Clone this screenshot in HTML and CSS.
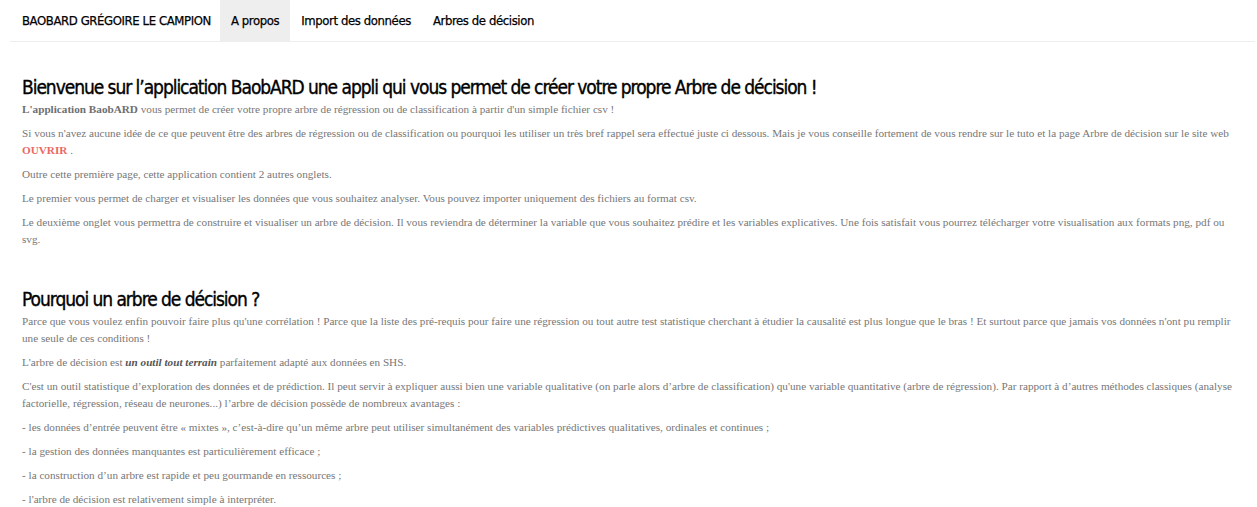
FILE: index.html
```html
<!DOCTYPE html>
<html lang="fr">
<head>
<meta charset="utf-8">
<title>BaobARD</title>
<link rel="stylesheet" href="styles.css">
</head>
<body>
<nav class="navbar">
  <span class="brand">BAOBARD GRÉGOIRE LE CAMPION</span>
  <ul class="nav">
    <li class="active">A propos</li>
    <li>Import des données</li>
    <li>Arbres de décision</li>
  </ul>
</nav>
<main class="content">
  <h3 class="title">Bienvenue sur l’application BaobARD une appli qui vous permet de créer votre propre Arbre de décision !</h3>
  <p><b>L'application BaobARD</b> vous permet de créer votre propre arbre de régression ou de classification à partir d'un simple fichier csv !</p>
  <p>Si vous n'avez aucune idée de ce que peuvent être des arbres de régression ou de classification ou pourquoi les utiliser un très bref rappel sera effectué juste ci dessous. Mais je vous conseille fortement de vous rendre sur le tuto et la page Arbre de décision sur le site web <a class="link">OUVRIR</a> .</p>
  <p>Outre cette première page, cette application contient 2 autres onglets.</p>
  <p>Le premier vous permet de charger et visualiser les données que vous souhaitez analyser. Vous pouvez importer uniquement des fichiers au format csv.</p>
  <p>Le deuxième onglet vous permettra de construire et visualiser un arbre de décision. Il vous reviendra de déterminer la variable que vous souhaitez prédire et les variables explicatives. Une fois satisfait vous pourrez télécharger votre visualisation aux formats png, pdf ou svg.</p>
  <h3 class="title second">Pourquoi un arbre de décision ?</h3>
  <p>Parce que vous voulez enfin pouvoir faire plus qu'une corrélation ! Parce que la liste des pré-requis pour faire une régression ou tout autre test statistique cherchant à étudier la causalité est plus longue que le bras ! Et surtout parce que jamais vos données n'ont pu remplir une seule de ces conditions !</p>
  <p>L'arbre de décision est <b><i>un outil tout terrain</i></b> parfaitement adapté aux données en SHS.</p>
  <p>C'est un outil statistique d’exploration des données et de prédiction. Il peut servir à expliquer aussi bien une variable qualitative (on parle alors d’arbre de classification) qu'une variable quantitative (arbre de régression). Par rapport à d’autres méthodes classiques (analyse factorielle, régression, réseau de neurones...) l’arbre de décision possède de nombreux avantages :</p>
  <p>- les données d’entrée peuvent être « mixtes », c’est-à-dire qu’un même arbre peut utiliser simultanément des variables prédictives qualitatives, ordinales et continues ;</p>
  <p>- la gestion des données manquantes est particulièrement efficace ;</p>
  <p>- la construction d’un arbre est rapide et peu gourmande en ressources ;</p>
  <p>- l'arbre de décision est relativement simple à interpréter.</p>
</main>
</body>
</html>
```

FILE: styles.css
```css
html, body {
  margin: 0;
  padding: 0;
  background: #fff;
}
body {
  font-family: "Liberation Serif", "Times New Roman", serif;
  font-size: 11.2px;
  line-height: 17px;
  color: #777;
}
.navbar {
  display: flex;
  align-items: stretch;
  height: 41px;
  margin: 0 2px 0 10px;
  border-bottom: 1px solid #eee;
  font-family: "DejaVu Sans Condensed", sans-serif;
  color: #000;
  font-size: 13px;
  letter-spacing: -0.4px;
  -webkit-text-stroke: 0.25px #000;
}
.brand {
  display: flex;
  align-items: center;
  padding: 0 9px 0 12px;
}
.nav {
  display: flex;
  margin: 0;
  padding: 0;
  list-style: none;
}
.nav li {
  display: flex;
  align-items: center;
  padding: 0 11px;
}
.nav li.active {
  background: #eee;
}
.content {
  padding: 33px 22px 0 22px;
}
.title {
  font-family: "DejaVu Sans Condensed", sans-serif;
  font-weight: normal;
  font-size: 19px;
  letter-spacing: -1.05px;
  line-height: 24px;
  color: #000;
  -webkit-text-stroke: 0.35px #000;
  margin: 0 0 2px 0;
}
.title.second {
  margin-top: 39px;
}
p {
  margin: 0 0 7px 0;
}
b {
  color: #6f6f6f;
}
p i {
  color: #555;
}
.link {
  color: #eb6864;
  font-weight: bold;
  text-decoration: none;
}
```
